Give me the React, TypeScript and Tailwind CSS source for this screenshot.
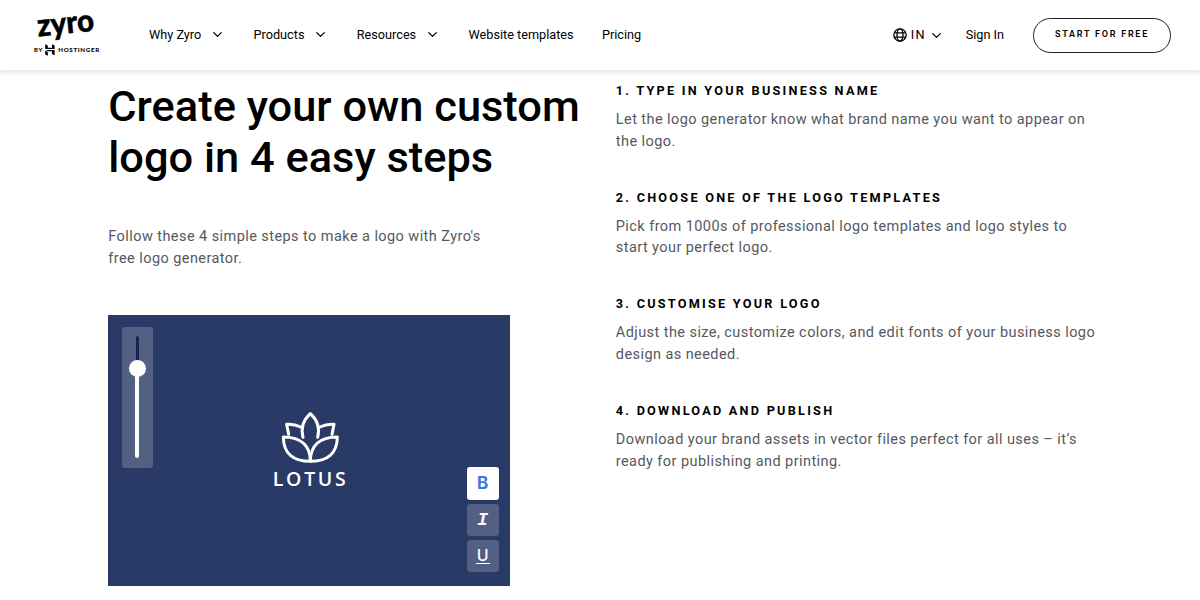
import { ChevronDown } from "lucide-react";

const navItems = [
  { label: "Why Zyro", hasMenu: true },
  { label: "Products", hasMenu: true },
  { label: "Resources", hasMenu: true },
  { label: "Website templates", hasMenu: false },
  { label: "Pricing", hasMenu: false },
];

const steps = [
  {
    title: "1. Type in your business name",
    text: "Let the logo generator know what brand name you want to appear on the logo.",
  },
  {
    title: "2. Choose one of the logo templates",
    text: "Pick from 1000s of professional logo templates and logo styles to start your perfect logo.",
  },
  {
    title: "3. Customise your logo",
    text: "Adjust the size, customize colors, and edit fonts of your business logo design as needed.",
  },
  {
    title: "4. Download and publish",
    text: "Download your brand assets in vector files perfect for all uses – it’s ready for publishing and printing.",
  },
];

const Logo = () => (
  <a href="#" className="block h-[70px] w-[70px]">
    <svg viewBox="0 0 70 70" width="70" height="70" fill="#000">
      <text
        x="7.2"
        y="36.6"
        transform="rotate(-6 7.2 36.6)"
        textLength="57"
        lengthAdjust="spacingAndGlyphs"
        fontFamily="Lato, sans-serif"
        fontWeight="900"
        fontSize="31"
        stroke="#000"
        strokeWidth="0.5"
      >
        zyro
      </text>
      <text x="3" y="51.8" textLength="8.4" fontFamily="Roboto, sans-serif" fontWeight="600" fontSize="6.2">
        BY
      </text>
      <path d="M14.2 44.2l2.6 1.4v2.2h3.8l2.6 1.3h-9zM21 44.2l2.6 1.4v3.6l-2.6-1.4zM14.2 54.4v-3.8l2.6 1.4v3.8zM14.6 49.9h9v5.4L21 53.9v-2.7h-3.8z" />
      <text x="27.2" y="51.8" textLength="41" fontFamily="Lato, sans-serif" fontWeight="900" fontSize="6.2">
        HOSTINGER
      </text>
    </svg>
  </a>
);

const Globe = () => (
  <svg width="14" height="14" viewBox="0 0 14 14" fill="none" stroke="#000" strokeWidth="1.3">
    <circle cx="7" cy="7" r="6.2" />
    <ellipse cx="7" cy="7" rx="3" ry="6.2" />
    <path d="M1.4 4.9h11.2M1.4 9.1h11.2" />
  </svg>
);

const Lotus = () => (
  <svg
    width="60"
    height="54"
    viewBox="60 30 180 162"
    fill="none"
    stroke="#fff"
    strokeWidth="9"
    strokeLinecap="round"
    strokeLinejoin="round"
  >
    <path d="M129 112C122 84 132 58 151 41C170 58 180 84 173 112" />
    <path d="M86 103L80 73C94 72 108 74 122 81" />
    <path d="M216 103L222 73C208 72 194 74 180 81" />
    <path d="M151 184C151 138 124 111 70 111C70 160 100 184 151 184Z" />
    <path d="M151 184C151 138 178 111 232 111C232 160 202 184 151 184Z" />
  </svg>
);

const Header = () => (
  <header className="relative z-10 flex h-[70px] items-center bg-white pr-[29px] pl-[31px] text-[12.7px] text-black shadow-[0_1px_7px_rgba(0,0,0,0.16)]">
    <Logo />
    <nav className="ml-12 flex items-center gap-[28.3px]">
      {navItems.map((item) => (
        <a key={item.label} href="#" className="flex items-center">
          {item.label}
          {item.hasMenu && <ChevronDown size={15} strokeWidth={2.1} className="ml-[9px]" />}
        </a>
      ))}
    </nav>
    <div className="ml-auto flex items-center">
      <Globe />
      <span className="ml-1 tracking-[1.2px]">IN</span>
      <ChevronDown size={15} strokeWidth={2.1} className="ml-[3px]" />
      <a href="#" className="ml-[22px]">
        Sign In
      </a>
      <a
        href="#"
        className="ml-[29px] flex h-[35px] w-[138px] items-center justify-center rounded-full border border-[#222] text-[9px] font-semibold tracking-[1.75px]"
      >
        START FOR FREE
      </a>
    </div>
  </header>
);

const Editor = () => (
  <div className="mt-[45px] flex h-[271px] w-[402px] justify-between bg-[#293a66] pt-3 pr-[11.5px] pb-[13.5px] pl-[13.5px]">
    <div className="flex h-[141px] w-[31px] flex-col items-center rounded-[3px] bg-[#535f83] pt-[9px]">
      <div className="h-[25px] w-[3px] rounded-t-full bg-[#172452]" />
      <div className="-mt-px size-[17px] rounded-full bg-white" />
      <div className="-mt-px h-[82px] w-1 rounded-b-full bg-white" />
    </div>
    <div className="flex flex-col items-center pt-[83.5px]">
      <Lotus />
      <span className="mt-[2.5px] pl-[2px] font-['Open_Sans',sans-serif] text-[19.5px] leading-6 font-semibold tracking-[2.7px] text-white">
        LOTUS
      </span>
    </div>
    <div className="flex flex-col justify-end gap-1 text-white">
      <div className="flex size-[32.3px] items-center justify-center rounded-[3px] bg-white font-[Inter,sans-serif] text-[17px] font-bold text-[#3f78dd]">
        B
      </div>
      <div className="flex size-[32.3px] items-center justify-center rounded-[3px] bg-[#535f83] pt-px font-['Liberation_Mono',monospace] text-[18px] font-bold italic">
        I
      </div>
      <div className="flex size-[32.3px] items-center justify-center rounded-[3px] bg-[#535f83]">
        <span className="border-b-[1.5px] border-white px-px font-[Inter,sans-serif] text-[16px] leading-[15px] font-medium">
          U
        </span>
      </div>
    </div>
  </div>
);

export default function App() {
  return (
    <div className="flex h-[600px] flex-col overflow-hidden bg-white font-[Roboto,sans-serif]">
      <Header />
      <main className="flex pl-[108.3px]">
        <section className="w-[507.5px] pt-3">
          <h1 className="text-[43.4px] leading-[50.7px] font-medium text-black">
            Create your own custom
            <br />
            logo in 4 easy steps
          </h1>
          <p className="mt-[43px] w-[400px] text-[14.5px] leading-[21.7px] tracking-[0.43px] text-[#56585e]">
            Follow these 4 simple steps to make a logo with Zyro's free logo generator.
          </p>
          <Editor />
        </section>
        <section className="flex w-[485px] flex-col gap-[36.3px] pt-3">
          {steps.map((step) => (
            <div key={step.title}>
              <h2 className="text-[12.7px] leading-[18px] font-bold tracking-[2.24px] text-black uppercase">
                {step.title}
              </h2>
              <p className="mt-[9px] text-[14.5px] leading-[21.7px] tracking-[0.43px] text-[#56585e]">
                {step.text}
              </p>
            </div>
          ))}
        </section>
      </main>
    </div>
  );
}
